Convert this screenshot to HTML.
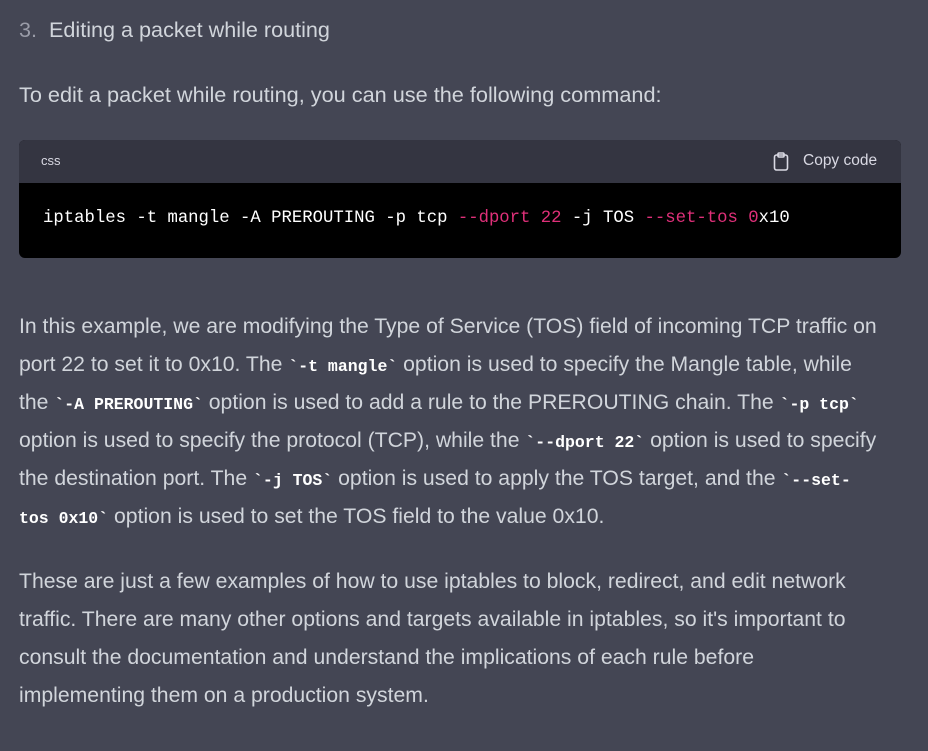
<!DOCTYPE html>
<html><head><style>
body{margin:0;width:928px;height:751px;background:#444654;color:#d1d5db;font-family:"Liberation Sans",sans-serif;font-size:21.2px;overflow:hidden;position:relative}
.l{position:absolute;left:19px;white-space:nowrap;line-height:38px}
code{font-family:"Liberation Mono",monospace;font-weight:bold;color:#fff;font-size:16.5px}
.cb{position:absolute;left:19px;top:140px;width:882px;height:118px;border-radius:6px;overflow:hidden;background:#000}
.hd{height:43px;background:#343541;color:#d9d9e3;font-size:14px;position:relative}
.pk{color:#df3079}
</style></head><body>
<div class="l" style="top:11px;font-size:21.6px"><span style="color:#9a9ca8">3.</span>&nbsp; Editing a packet while routing</div>
<div class="l" style="top:76px;font-size:21.7px">To edit a packet while routing, you can use the following command:</div>
<div class="cb">
<div class="hd"><span style="position:absolute;left:22px;top:13px;font-size:13px">css</span>
<svg style="position:absolute;left:754px;top:12px" width="16" height="19" viewBox="0 0 16 19" fill="none" stroke="#d9d9e3" stroke-width="1.6"><rect x="1.5" y="3" width="13" height="15" rx="2"/><rect x="5" y="1" width="6" height="4" rx="1"/></svg>
<span style="position:absolute;left:784px;top:12px;font-size:15.5px">Copy code</span></div>
<div style="position:absolute;left:24px;top:69px;font-family:'Liberation Mono',monospace;font-size:17.3px;color:#fff;white-space:nowrap">iptables -t mangle -A PREROUTING -p tcp <span class="pk">--dport 22</span> -j TOS <span class="pk">--set-tos 0</span>x10</div>
</div>
<div class="l" style="top:308px">In this example, we are modifying the Type of Service (TOS) field of incoming TCP traffic on</div>
<div class="l" style="top:346px">port 22 to set it to 0x10. The <code>`-t mangle`</code> option is used to specify the Mangle table, while</div>
<div class="l" style="top:384px">the <code>`-A PREROUTING`</code> option is used to add a rule to the PREROUTING chain. The <code>`-p tcp`</code></div>
<div class="l" style="top:422px">option is used to specify the protocol (TCP), while the <code>`--dport 22`</code> option is used to specify</div>
<div class="l" style="top:460px">the destination port. The <code>`-j TOS`</code> option is used to apply the TOS target, and the <code>`--set-</code></div>
<div class="l" style="top:498px"><code>tos 0x10`</code> option is used to set the TOS field to the value 0x10.</div>
<div class="l" style="top:563px">These are just a few examples of how to use iptables to block, redirect, and edit network</div>
<div class="l" style="top:601px">traffic. There are many other options and targets available in iptables, so it's important to</div>
<div class="l" style="top:639px">consult the documentation and understand the implications of each rule before</div>
<div class="l" style="top:677px">implementing them on a production system.</div>
</body></html>
